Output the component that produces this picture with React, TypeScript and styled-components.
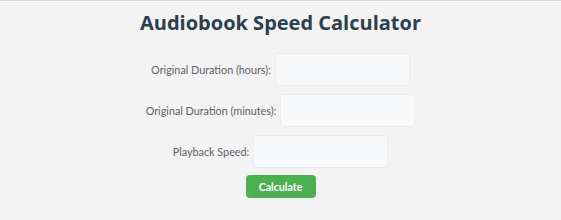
import React from "react";
import styled, { createGlobalStyle } from "styled-components";

const Global = createGlobalStyle`
  html, body { margin: 0; padding: 0; }
  body {
    background: #f3f3f3;
    font-family: Lato, "Noto Sans", sans-serif;
  }
`;

const Page = styled.div`
  border-top: 1px solid #d6d6d6;
  box-shadow: inset 0 1px 0 #fafafa;
  min-height: 219px;
  display: flex;
  flex-direction: column;
  align-items: center;
`;

const Title = styled.h1`
  margin: 8px 0 16px;
  font-family: "Open Sans", "Noto Sans", sans-serif;
  font-size: 20px;
  font-weight: 700;
  color: #2c3e50;
  line-height: 28px;
`;

const Row = styled.div`
  display: flex;
  align-items: center;
  justify-content: center;
  gap: 4px;
  margin-bottom: 8px;
`;

const Label = styled.label`
  font-size: 10.8px;
  color: #5f5f66;
`;

const Input = styled.input`
  box-sizing: border-box;
  width: 135px;
  height: 33px;
  background: #f8f9fb;
  border: 1px solid #ebebeb;
  border-radius: 3px;
  outline: none;
`;

const Button = styled.button`
  margin-top: -1px;
  background: #4caf50;
  color: #fff;
  border: none;
  border-radius: 4px;
  font-family: inherit;
  font-weight: 700;
  font-size: 10.6px;
  width: 70px;
  height: 23px;
  padding: 0;
`;

export default function App() {
  return (
    <>
      <Global />
      <Page>
        <Title>Audiobook Speed Calculator</Title>
        <Row>
          <Label>Original Duration (hours):</Label>
          <Input type="text" />
        </Row>
        <Row>
          <Label>Original Duration (minutes):</Label>
          <Input type="text" />
        </Row>
        <Row>
          <Label>Playback Speed:</Label>
          <Input type="text" />
        </Row>
        <Button>Calculate</Button>
      </Page>
    </>
  );
}
